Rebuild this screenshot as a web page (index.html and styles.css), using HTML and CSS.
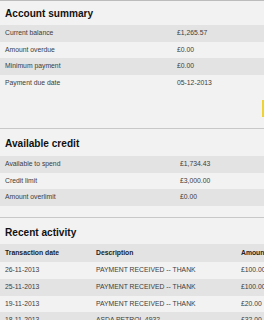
FILE: index.html
```html
<!DOCTYPE html>
<html lang="en">
<head>
    <meta charset="UTF-8">
    <meta name="viewport" content="width=device-width, initial-scale=1.0">
    <title>Account overview</title>
    <link rel="stylesheet" href="styles.css">
</head>
<body>
    <div class="page">
        <section class="panel panel-first">
            <h2>Account summary</h2>
            <div class="rows">
                <div class="row"><span>Current balance</span><span>£1,265.57</span></div>
                <div class="row"><span>Amount overdue</span><span>£0.00</span></div>
                <div class="row"><span>Minimum payment</span><span>£0.00</span></div>
                <div class="row"><span>Payment due date</span><span>05-12-2013</span></div>
            </div>
        </section>

        <section class="panel panel-credit">
            <h2>Available credit</h2>
            <div class="rows">
                <div class="row"><span>Available to spend</span><span>£1,734.43</span></div>
                <div class="row"><span>Credit limit</span><span>£3,000.00</span></div>
                <div class="row"><span>Amount overlimit</span><span>£0.00</span></div>
            </div>
        </section>

        <section class="panel panel-activity">
            <h2>Recent activity</h2>
            <div class="activity">
                <div class="activity-row activity-head">
                    <span>Transaction date</span><span>Description</span><span>Amount</span>
                </div>
                <div class="activity-row">
                    <span>26-11-2013</span><span>PAYMENT RECEIVED -- THANK</span><span>£100.00</span>
                </div>
                <div class="activity-row">
                    <span>25-11-2013</span><span>PAYMENT RECEIVED -- THANK</span><span>£100.00</span>
                </div>
                <div class="activity-row">
                    <span>19-11-2013</span><span>PAYMENT RECEIVED -- THANK</span><span>£20.00</span>
                </div>
                <div class="activity-row">
                    <span>18-11-2013</span><span>ASDA PETROL 4932</span><span>£32.00</span>
                </div>
            </div>
        </section>

        <div class="side-tab"></div>
    </div>
</body>
</html>
```

FILE: styles.css
```css
html, body {
    margin: 0;
    height: 100%;
    overflow: hidden;
}
body {
    font-family: "Liberation Sans", Arial, sans-serif;
    background-color: #f2f2f2;
    color: #3c3c3c;
}
.page {
    position: relative;
    height: 100%;
}
.panel {
    border-top: 1px solid #c8c8c8;
}
.panel h2 {
    margin: 0;
    padding: 9px 5px 6px;
    font-size: 10.1px;
    line-height: 12px;
    font-weight: bold;
    color: #111;
}
.panel-first {
    border-top-color: #bcbcbc;
    margin-bottom: 36.6px;
}
.panel-first h2 {
    padding: 7px 5px 5px;
}
.panel-credit {
    margin-bottom: 11.4px;
}
.row {
    display: grid;
    grid-template-columns: 172px 1fr;
    padding-left: 5px;
    height: 16.6px;
    line-height: 16.6px;
    font-size: 6.8px;
    white-space: nowrap;
}
.panel-credit .row {
    grid-template-columns: 175px 1fr;
}
.row:nth-child(odd) {
    background-color: #e3e3e3;
}
.panel h2 + .activity {
    margin-top: -1px;
}
.activity-row {
    display: grid;
    grid-template-columns: 91px 145px 60px;
    padding-left: 5px;
    height: 16.7px;
    line-height: 16.7px;
    font-size: 6.8px;
    white-space: nowrap;
}
.activity-row:nth-child(odd) {
    background-color: #e3e3e3;
}
.activity-head {
    height: 18px;
    line-height: 18px;
    font-weight: bold;
    color: #222;
    background-color: #e0e0e0;
}
.side-tab {
    position: absolute;
    right: 0;
    top: 100px;
    width: 2px;
    height: 17px;
    background-color: #f0d232;
}
```
